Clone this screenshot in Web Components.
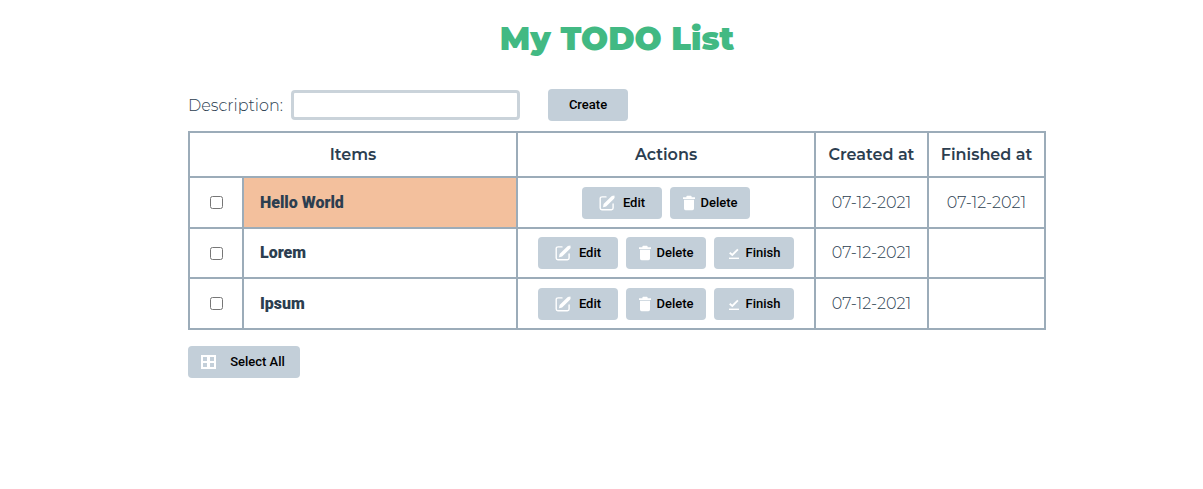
<!DOCTYPE html>
<html lang="en">
<head>
<meta charset="utf-8">
<meta name="viewport" content="width=device-width, initial-scale=1">
<title>My TODO List</title>
<style>
  body { margin: 0; background: #fff; color: #2c3e50; font: 300 16px/20px Montserrat, Inter, sans-serif; }
</style>
</head>
<body>
<todo-app></todo-app>

<template id="app-template">
  <style>
    :host { display: block; padding: 20px 0 20px 31px; }
    main { display: grid; max-width: 858px; margin: 0 auto; }
    h1 { margin: 0; color: #42b983; font-size: 32px; line-height: 38px; font-weight: 900; text-align: center; }
    todo-form { margin-top: 31px; }
    todo-table { margin-top: 10px; }
    todo-button { margin-top: 16px; justify-self: start; }
  </style>
  <main>
    <h1>My TODO List</h1>
    <todo-form></todo-form>
    <todo-table></todo-table>
    <todo-button icon="grid" wide>Select All</todo-button>
  </main>
</template>

<template id="form-template">
  <style>
    :host { display: block; }
    form { display: flex; align-items: center; }
    label { width: 103px; padding-top: 2px; }
    input { box-sizing: border-box; width: 229px; height: 30px; margin: 0 28px 0 0; padding: 2px 6px; border: 3px solid #cad3da; border-radius: 4px; background: #fff; color: inherit; font: inherit; outline: none; }
  </style>
  <form>
    <label for="description">Description:</label>
    <input id="description" type="text" autocomplete="off">
    <todo-button>Create</todo-button>
  </form>
</template>

<template id="button-template">
  <style>
    :host { display: inline-block; width: 80px; height: 32px; }
    :host([wide]) { width: 112px; }
    button { box-sizing: border-box; display: flex; align-items: center; justify-content: center; width: 100%; height: 100%; margin: 0; padding: 0; border: 0; border-radius: 4px; background: #c3cfd9; color: #000; font: 500 13px/16px Roboto, sans-serif; white-space: nowrap; cursor: pointer; }
    svg { display: block; flex: none; width: 16px; height: 16px; margin-right: 8px; }
    .trash { width: 14px; margin-right: 4px; }
    .check { width: 12px; margin-right: 6px; }
    .grid { margin-right: 13px; }
    :host([wide]) button { padding-right: 2px; }
  </style>
  <button type="button"><span id="icon"></span><slot></slot></button>
</template>

<template id="table-template">
  <style>
    :host { display: block; }
    table { width: 100%; border-collapse: collapse; table-layout: fixed; }
    .c-check { width: 54px; }
    .c-actions { width: 298px; }
    .c-created { width: 113px; }
    .c-finished { width: 117px; }
    th, td { padding: 0; border: 2px solid #9cacb9; text-align: center; }
    thead th { height: 43px; font-weight: 600; }
    tbody td, tbody th { height: 49px; }
    tbody tr:nth-child(even) > * { height: 48px; }
    tbody th { padding-left: 16px; text-align: left; font: 900 16px/20px Roboto, sans-serif; }
    .done { background: #f3c09d; }
    input { display: block; width: 13px; height: 13px; margin: 0 auto; }
    .actions { display: flex; justify-content: center; gap: 8px; }
  </style>
  <table>
    <colgroup><col class="c-check"><col><col class="c-actions"><col class="c-created"><col class="c-finished"></colgroup>
    <thead>
      <tr><th scope="colgroup" colspan="2">Items</th><th scope="col">Actions</th><th scope="col">Created at</th><th scope="col">Finished at</th></tr>
    </thead>
    <tbody></tbody>
  </table>
</template>

<script>
  const ICONS = {
    edit: '<svg class="edit" viewBox="0 0 16 16" aria-hidden="true"><path d="M7 1.9H3.2Q1.2 1.9 1.2 3.6V13Q1.2 14.7 2.9 14.7H12.4Q14.1 14.7 14.1 13V9" fill="none" stroke="#fff" stroke-width="1.4" stroke-linecap="round"/><path d="M4 12.2 4.6 9.1 12.5 1.2Q13.2.5 14.1.7L15.4.5 15.6 2.1Q15.8 3 15 3.7L7.1 11.5Z" fill="#fff"/></svg>',
    trash: '<svg class="trash" viewBox="0 0 14 16" aria-hidden="true"><path d="M1 2.3H4.4V1.6Q4.4.8 5.2.8H8.8Q9.6.8 9.6 1.6V2.3H13V4H1ZM2 4.8H12V13.6Q12 15.2 10.4 15.2H3.6Q2 15.2 2 13.6Z" fill="#fff"/></svg>',
    check: '<svg class="check" viewBox="0 0 12 16" aria-hidden="true"><path d="M1.7 7.8 4.3 10 9.9 4.3" fill="none" stroke="#fff" stroke-width="1.8"/><path d="M1 13.3H11" stroke="#fff" stroke-width="1.4"/></svg>',
    grid: '<svg class="grid" viewBox="0 0 16 16" aria-hidden="true"><path d="M0 1H15V15H0ZM2 3V7H6V3ZM9 3V7H13V3ZM2 9V13H6V9ZM9 9V13H13V9Z" fill="#fff" fill-rule="evenodd"/></svg>'
  };

  class TemplateElement extends HTMLElement {
    constructor() {
      super();
      const template = document.getElementById(this.constructor.template);
      this.attachShadow({ mode: 'open' }).append(template.content.cloneNode(true));
    }
  }

  class TodoButton extends TemplateElement {
    static template = 'button-template';
    connectedCallback() {
      this.shadowRoot.getElementById('icon').innerHTML = ICONS[this.getAttribute('icon')] || '';
    }
  }

  class TodoForm extends TemplateElement {
    static template = 'form-template';
  }

  class TodoTable extends TemplateElement {
    static template = 'table-template';
    items = [
      { name: 'Hello World', created: '07-12-2021', finished: '07-12-2021' },
      { name: 'Lorem', created: '07-12-2021', finished: '' },
      { name: 'Ipsum', created: '07-12-2021', finished: '' }
    ];
    connectedCallback() {
      this.shadowRoot.querySelector('tbody').innerHTML = this.items.map((item, i) => `
        <tr>
          <td><input type="checkbox" aria-labelledby="item-${i}"></td>
          <th scope="row" id="item-${i}" class="${item.finished ? 'done' : ''}">${item.name}</th>
          <td><div class="actions">
            <todo-button icon="edit">Edit</todo-button>
            <todo-button icon="trash">Delete</todo-button>
            ${item.finished ? '' : '<todo-button icon="check">Finish</todo-button>'}
          </div></td>
          <td>${item.created}</td>
          <td>${item.finished}</td>
        </tr>`).join('');
    }
  }

  class TodoApp extends TemplateElement {
    static template = 'app-template';
  }

  customElements.define('todo-button', TodoButton);
  customElements.define('todo-form', TodoForm);
  customElements.define('todo-table', TodoTable);
  customElements.define('todo-app', TodoApp);
</script>
</body>
</html>
